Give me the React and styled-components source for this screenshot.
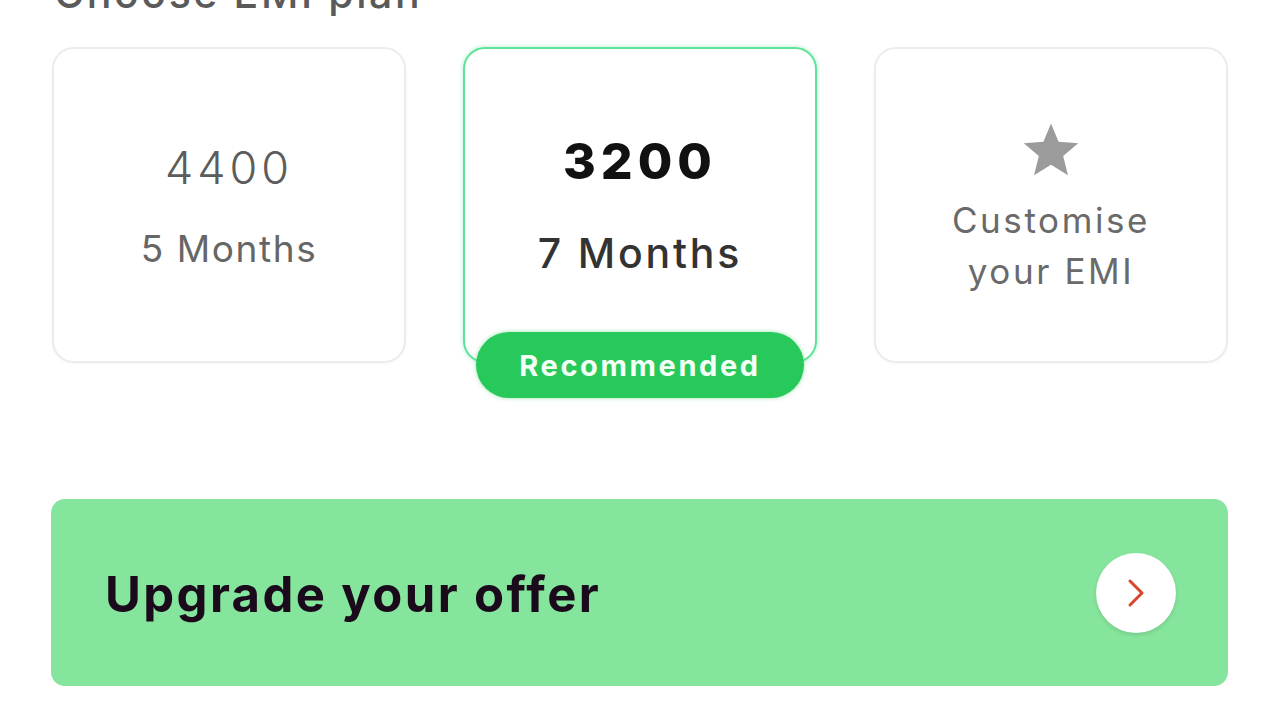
import styled, { createGlobalStyle } from "styled-components";

const GlobalStyle = createGlobalStyle`
  html, body {
    margin: 0;
    padding: 0;
    background: #ffffff;
    overflow: hidden;
  }
  body {
    font-family: Inter, "Noto Sans", sans-serif;
  }
`

const Page = styled.main`
  width: 1280px;
  height: 720px;
  overflow: hidden;
  padding: 0 52px 0 51px;
  box-sizing: border-box;
`

const Heading = styled.h2`
  margin: -31px 0 0 3px;
  font-size: 41px;
  line-height: 48px;
  font-weight: 500;
  letter-spacing: 2.6px;
  color: #5a5a5a;
`

const Plans = styled.div`
  display: grid;
  grid-template-columns: repeat(3, 354px);
  column-gap: 57px;
  margin-top: 30px;
  margin-left: 1px;
`

const Plan = styled.div`
  position: relative;
  height: 316px;
  box-sizing: border-box;
  border-radius: 22px;
  border: ${({selected}) => selected ? "2px solid #5fe39a" : "2px solid #ececec"};
  box-shadow: ${({selected}) => selected ? "0 0 4px rgba(60, 220, 130, 0.45)" : "0 1px 3px rgba(0, 0, 0, 0.04)"};
  background: #fff;
  display: flex;
  flex-direction: column;
  align-items: center;
  justify-content: center;
  color: #666;
`

const Amount = styled.div`
  font-size: ${({selected}) => selected ? "50px" : "45px"};
  font-weight: ${({selected}) => selected ? 800 : 300};
  color: ${({selected}) => selected ? "#111" : "#5c5c5c"};
  letter-spacing: ${({selected}) => selected ? "5px" : "4px"};
  line-height: 1;
  margin-top: ${({selected}) => selected ? "0" : "2px"};
`

const Duration = styled.div`
  font-size: ${({selected}) => selected ? "41px" : "37px"};
  font-weight: ${({selected}) => selected ? 500 : 400};
  color: ${({selected}) => selected ? "#333" : "#666"};
  letter-spacing: ${({selected}) => selected ? "2.8px" : "1.6px"};
  margin-top: ${({selected}) => selected ? "47px" : "40px"};
  line-height: 1;
`

const CustomText = styled.div`
  font-size: 35px;
  font-weight: 400;
  color: #6a6a6a;
  text-align: center;
  letter-spacing: 2.6px;
  line-height: 51px;
  margin-top: 16px;
`

const StarIcon = styled.svg`
  margin-top: 8px;
`

const Badge = styled.div`
  position: absolute;
  left: 11px;
  right: 11px;
  bottom: -37px;
  height: 66px;
  border-radius: 33px;
  background: #27c95b;
  color: #f4fff6;
  font-size: 29px;
  font-weight: 700;
  letter-spacing: 2.6px;
  display: flex;
  align-items: center;
  justify-content: center;
  box-shadow: 0 0 4px rgba(40, 200, 90, 0.5);
`

const Upgrade = styled.div`
  margin-top: 136px;
  height: 187px;
  border-radius: 14px;
  background: #86e59c;
  display: flex;
  align-items: center;
  justify-content: space-between;
  padding: 0 52px 0 54px;
  box-sizing: border-box;
`

const UpgradeTitle = styled.div`
  font-size: 49px;
  font-weight: 700;
  color: #1a0a1c;
  letter-spacing: 2.4px;
  margin-top: 4px;
`

const ArrowButton = styled.div`
  width: 80px;
  height: 80px;
  border-radius: 50%;
  background: #fff;
  display: flex;
  align-items: center;
  justify-content: center;
  box-shadow: 0 2px 4px rgba(0, 0, 0, 0.12);
`

function Star() {
    return (
        <StarIcon width="60" height="57" viewBox="0 0 24 23">
            <path d="M12 0.6l3.05 7.4 7.95 0.55-6.1 5.15 1.95 7.75L12 17.2l-6.85 4.25 1.95-7.75L1 8.55 8.95 8z" fill="#9b9b9b"/>
        </StarIcon>
    )
}

function Chevron() {
    return (
        <svg width="20" height="30" viewBox="0 0 20 30">
            <path d="M4 3l12 12L4 27" fill="none" stroke="#d9452a" strokeWidth="3" strokeLinecap="round" strokeLinejoin="round"/>
        </svg>
    )
}

function App() {

    return (
        <>
            <GlobalStyle/>
            <Page>
                <Heading>Choose EMI plan</Heading>
                <Plans>
                    <Plan>
                        <Amount>4400</Amount>
                        <Duration>5 Months</Duration>
                    </Plan>
                    <Plan selected>
                        <Amount selected>3200</Amount>
                        <Duration selected>7 Months</Duration>
                        <Badge>Recommended</Badge>
                    </Plan>
                    <Plan>
                        <Star/>
                        <CustomText>Customise<br/>your EMI</CustomText>
                    </Plan>
                </Plans>
                <Upgrade>
                    <UpgradeTitle>Upgrade your offer</UpgradeTitle>
                    <ArrowButton><Chevron/></ArrowButton>
                </Upgrade>
            </Page>
        </>
    )
}

export default App
